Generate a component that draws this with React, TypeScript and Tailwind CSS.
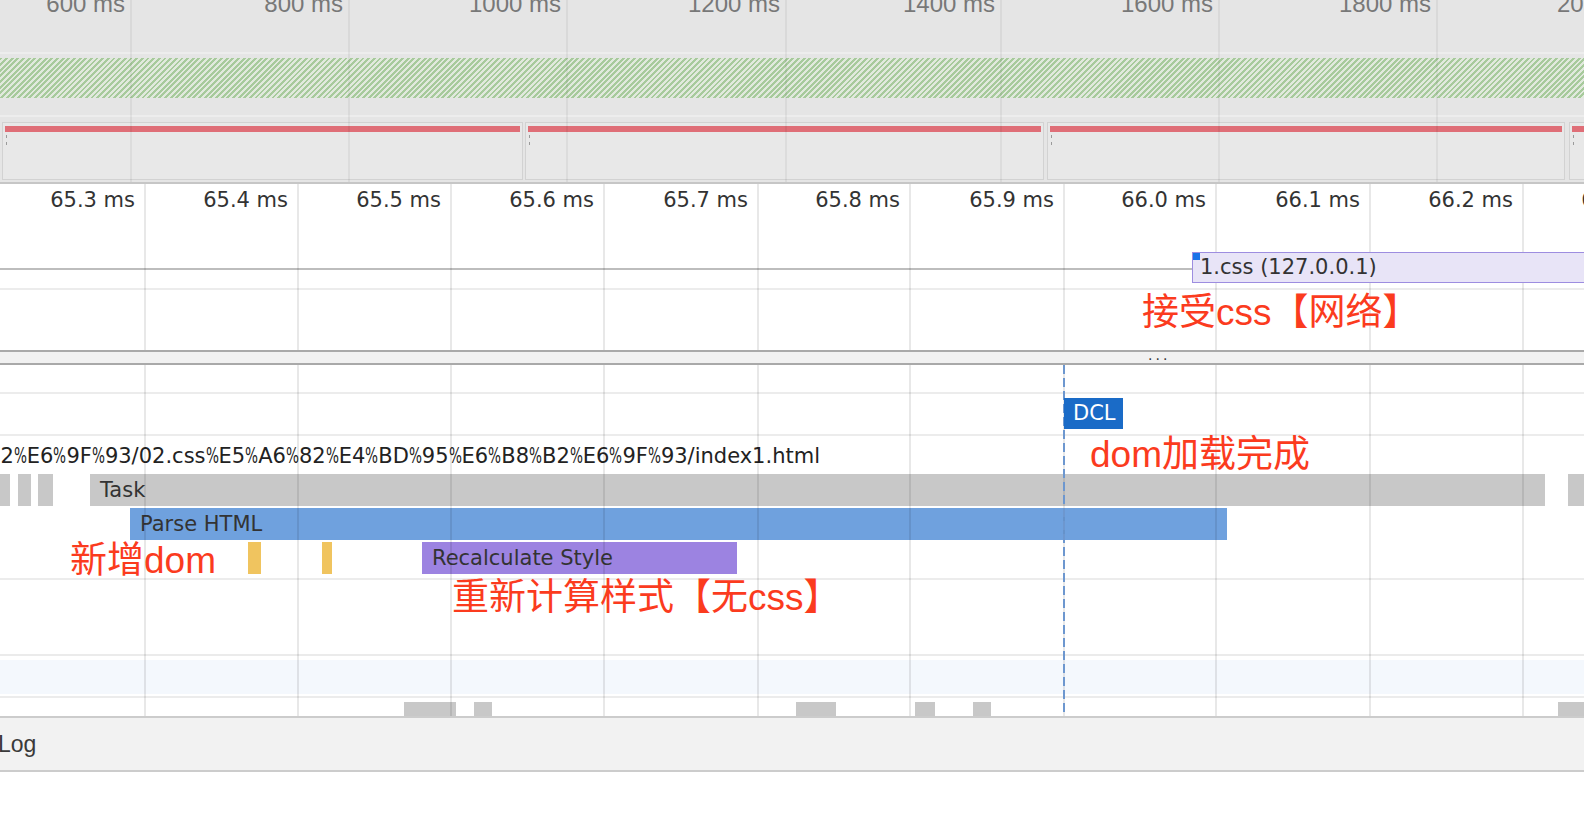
import React from "react";

// Overview (top strip) ticks: gridline x + label
const overviewTicks = [
    { x: 131, label: "600 ms" },
    { x: 349, label: "800 ms" },
    { x: 567, label: "1000 ms" },
    { x: 786, label: "1200 ms" },
    { x: 1001, label: "1400 ms" },
    { x: 1219, label: "1600 ms" },
    { x: 1437, label: "1800 ms" },
    { x: 1655, label: "2000 ms" },
];

const frames = [
    { left: 2, width: 521 },
    { left: 525, width: 519 },
    { left: 1047, width: 518 },
    { left: 1569, width: 120 },
];

// Detail ruler ticks
const detailTicks = [
    { x: 145, label: "65.3 ms" },
    { x: 298, label: "65.4 ms" },
    { x: 451, label: "65.5 ms" },
    { x: 604, label: "65.6 ms" },
    { x: 758, label: "65.7 ms" },
    { x: 910, label: "65.8 ms" },
    { x: 1064, label: "65.9 ms" },
    { x: 1216, label: "66.0 ms" },
    { x: 1370, label: "66.1 ms" },
    { x: 1523, label: "66.2 ms" },
    { x: 1676, label: "66.3 ms" },
];

const taskBlocks = [
    { left: 0, width: 9 },
    { left: 18, width: 13 },
    { left: 38, width: 15 },
    { left: 1568, width: 40 },
];

const bottomBlocks = [
    { left: 404, width: 52 },
    { left: 474, width: 18 },
    { left: 796, width: 40 },
    { left: 915, width: 20 },
    { left: 973, width: 18 },
    { left: 1558, width: 40 },
];

const url = "%E6%B8%B2%E6%9F%93/02.css%E5%A6%82%E4%BD%95%E6%B8%B2%E6%9F%93/index1.html";

const annot = "font-['Liberation_Sans','Noto_Sans_CJK_SC',sans-serif] text-[37px] leading-none text-[#fb3b1e] whitespace-nowrap";

function GridLines() {
    return (
        <>
            {detailTicks.map((t) => (
                <div
                    key={t.x}
                    className="pointer-events-none absolute top-0 bottom-0 w-[2px] bg-black/[0.09]"
                    style={{ left: t.x - 1 }}
                />
            ))}
        </>
    );
}

function Pct() {
    return (
        <span className="inline-block w-[13px]">
            <span className="inline-block origin-left scale-x-[0.65]">%</span>
        </span>
    );
}

function Overview() {
    return (
        <div className="relative h-[182px] bg-[#e5e5e5]">
            {/* labels, cut at the top */}
            <div className="relative h-[52px]">
                {overviewTicks.map((t) => (
                    <span
                        key={t.label}
                        className="absolute top-[-8px] whitespace-nowrap font-['Liberation_Sans',sans-serif] text-[24px] leading-none text-[#787878]"
                        style={{ right: 1584 - (t.x - 6) }}
                    >
                        {t.label}
                    </span>
                ))}
            </div>
            <div className="h-[2px] bg-[#ededed]" />
            <div className="h-[4px]" />
            <div className="h-[40px] bg-[repeating-linear-gradient(135deg,#a7ca9c_0px,#a7ca9c_2px,#e1e9dd_2px,#e1e9dd_4px)]" />
            <div className="h-[17px]" />
            <div className="h-[2px] bg-[#ededed]" />
            <div className="h-[5px]" />
            {/* frames */}
            <div className="relative h-[58px]">
                {frames.map((f) => (
                    <div
                        key={f.left}
                        className="absolute top-0 h-[58px] border border-[#d2d2d2] bg-[#e8e8e8]"
                        style={{ left: f.left, width: f.width }}
                    >
                        <div className="absolute top-[3px] left-[2px] right-[2px] h-[6px] bg-[#df6e77]" />
                        <div className="absolute top-[12px] left-[3px] h-[3px] w-[1px] bg-[#9a9a9a]" />
                        <div className="absolute top-[19px] left-[3px] h-[3px] w-[1px] bg-[#9a9a9a]" />
                    </div>
                ))}
            </div>
            <div className="h-[2px]" />
            {overviewTicks.map((t) => (
                <div
                    key={t.x}
                    className="pointer-events-none absolute top-0 bottom-0 w-[2px] bg-black/[0.05]"
                    style={{ left: t.x - 1 }}
                />
            ))}
        </div>
    );
}

function RulerAndNetwork() {
    return (
        <div className="relative h-[166px] bg-white">
            <GridLines />
            <div className="relative h-[84px]">
                {detailTicks.map((t) => (
                    <span
                        key={t.label}
                        className="absolute top-[6px] whitespace-nowrap text-[21px] leading-none text-[#333]"
                        style={{ right: 1584 - (t.x - 10) }}
                    >
                        {t.label}
                    </span>
                ))}
            </div>
            <div className="h-[2px] bg-[#bdbdbd]" />
            <div className="h-[18px]" />
            <div className="h-[2px] bg-[#ececec]" />
            <div className="h-[60px]" />

            {/* network request */}
            <div className="absolute top-[68px] left-[1192px] flex h-[31px] w-[420px] items-center border border-[#9d8de0] bg-[#e8e4f7] pl-[7px] text-[21px] leading-none text-[#333]">
                <div className="absolute top-0 left-0 h-[7px] w-[7px] bg-[#1a73e8]" />
                1.css (127.0.0.1)
            </div>
            <span className={`absolute top-[110px] left-[1142px] ${annot}`}>接受css【网络】</span>
        </div>
    );
}

function Bar({ left, width, color, label }: { left: number; width: number; color: string; label?: string }) {
    return (
        <div
            className={`absolute top-0 flex h-[32px] items-center overflow-hidden pl-[10px] text-[21px] leading-none text-[#333] whitespace-nowrap ${color}`}
            style={{ left, width }}
        >
            {label}
        </div>
    );
}

function FlameChart() {
    return (
        <div className="relative h-[351px] bg-white">
            <div className="h-[27px]" />
            <div className="h-[2px] bg-[#ececec]" />
            <div className="relative h-[40px]">
                <div className="absolute top-[4px] left-[1064px] z-10 flex h-[31px] w-[59px] items-center bg-[#1a6bc7] pl-[9px] text-[21px] leading-none text-white">
                    DCL
                </div>
            </div>
            <div className="h-[2px] bg-[#ececec]" />
            <div className="relative h-[38px] overflow-hidden">
                <span className="absolute top-[10px] right-[764px] whitespace-nowrap text-[21px] leading-none text-[#222]">
                    {url.split("%").map((part, i) => (
                        <React.Fragment key={i}>
                            {i > 0 && <Pct />}
                            {part}
                        </React.Fragment>
                    ))}
                </span>
            </div>
            {/* Task */}
            <div className="relative h-[32px]">
                {taskBlocks.map((b) => (
                    <Bar key={b.left} left={b.left} width={b.width} color="bg-[#c8c8c8]" />
                ))}
                <Bar left={90} width={1455} color="bg-[#c8c8c8]" label="Task" />
            </div>
            <div className="h-[2px]" />
            {/* Parse HTML */}
            <div className="relative h-[32px]">
                <Bar left={130} width={1097} color="bg-[#6fa1de]" label="Parse HTML" />
            </div>
            <div className="h-[2px]" />
            {/* children */}
            <div className="relative h-[32px]">
                <Bar left={248} width={13} color="bg-[#f0c45f]" />
                <Bar left={322} width={10} color="bg-[#f0c45f]" />
                <Bar left={422} width={315} color="bg-[#9c83e1]" label="Recalculate Style" />
            </div>
            <div className="h-[4px]" />
            <div className="h-[2px] bg-[#ececec]" />
            <div className="h-[74px]" />
            <div className="h-[2px] bg-[#ebebeb]" />
            <div className="h-[4px]" />
            <div className="h-[34px] bg-[#f4f8fd]" />
            <div className="h-[2px]" />
            <div className="h-[2px] bg-[#ececec]" />
            <div className="h-[4px]" />
            <div className="relative h-[14px]">
                {bottomBlocks.map((b) => (
                    <div key={b.left} className="absolute top-0 h-[14px] bg-[#c8c8c8]" style={{ left: b.left, width: b.width }} />
                ))}
            </div>

            <GridLines />
            {/* DCL marker line */}
            <div className="pointer-events-none absolute top-0 bottom-0 left-[1063px] w-[2px] bg-[repeating-linear-gradient(to_bottom,#6d97cf_0px,#6d97cf_9px,transparent_9px,transparent_13px)]" />

            <span className={`absolute top-[71px] left-[1090px] ${annot}`}>dom加载完成</span>
            <span className={`absolute top-[177px] left-[70px] ${annot}`}>新增dom</span>
            <span className={`absolute top-[214px] left-[452px] ${annot}`}>重新计算样式【无css】</span>
        </div>
    );
}

export default function App() {
    return (
        <div className="relative h-[826px] w-[1584px] overflow-hidden bg-white font-['DejaVu_Sans',sans-serif]">
            <Overview />
            <div className="h-[2px] bg-[#c6c6c6]" />
            <RulerAndNetwork />
            <div className="h-[2px] bg-[#a9a9a9]" />
            <div className="relative h-[11px] bg-[#f1f1f1]">
                <span className="absolute top-[-4px] left-[1148px] text-[14px] leading-none tracking-[3px] text-[#333]">...</span>
            </div>
            <div className="h-[2px] bg-[#a9a9a9]" />
            <FlameChart />
            <div className="h-[2px] bg-[#cccccc]" />
            <div className="flex h-[52px] items-center bg-[#f2f2f2]">
                <span className="-ml-[2px] font-['Liberation_Sans',sans-serif] text-[23px] leading-none text-[#3a3a3a]">Log</span>
            </div>
            <div className="h-[2px] bg-[#cccccc]" />
        </div>
    );
}
